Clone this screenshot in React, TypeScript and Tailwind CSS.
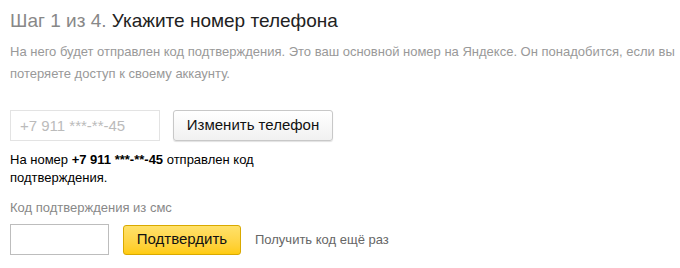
export default function App() {
  return (
    <div className="h-[268px] w-[680px] bg-white px-[10px] pt-[8px] font-['Liberation_Sans',Arial,sans-serif]">
      <h1 className="text-[19px] leading-[26px] text-[#222]">
        <span className="text-[#888]">Шаг 1 из 4.</span> Укажите номер телефона
      </h1>
      <p className="mt-[7px] whitespace-nowrap text-[13px] leading-[22px] text-[#999]">
        На него будет отправлен код подтверждения. Это ваш основной номер на Яндексе. Он понадобится, если вы
        <br />
        потеряете доступ к своему аккаунту.
      </p>

      <div className="mt-[25px] flex items-center gap-[13px]">
        <input
          disabled
          value="+7 911 ***-**-45"
          className="h-[31px] w-[150px] border border-[#e3e3e3] bg-white px-[9px] text-[15px] text-[#bbb]"
        />
        <button className="h-[31px] w-[160px] rounded-[3px] border border-[#c8c8c8] bg-gradient-to-b from-white to-[#f1f1f1] text-[15px] text-[#111] shadow-[0_1px_1px_rgba(0,0,0,0.12)]">
          Изменить телефон
        </button>
      </div>

      <p className="mt-[10px] text-[13px] leading-[18px] text-black">
        На номер <b>+7 911 ***-**-45</b> отправлен код
        <br />
        подтверждения.
      </p>

      <div className="mt-[12px] text-[13px] leading-[18px] text-[#888]">Код подтверждения из смс</div>

      <div className="mt-[7px] flex items-center">
        <input className="h-[31px] w-[99px] border border-[#bdbdbd] bg-white px-2 text-[15px] outline-none" />
        <button className="ml-[14px] h-[30px] w-[118px] rounded-[3px] border border-[#d9a900] bg-gradient-to-b from-[#ffe169] to-[#ffcb0a] text-[15px] text-[#111]">
          Подтвердить
        </button>
        <span className="ml-[14px] text-[13px] text-[#666]">Получить код ещё раз</span>
      </div>
    </div>
  );
}
